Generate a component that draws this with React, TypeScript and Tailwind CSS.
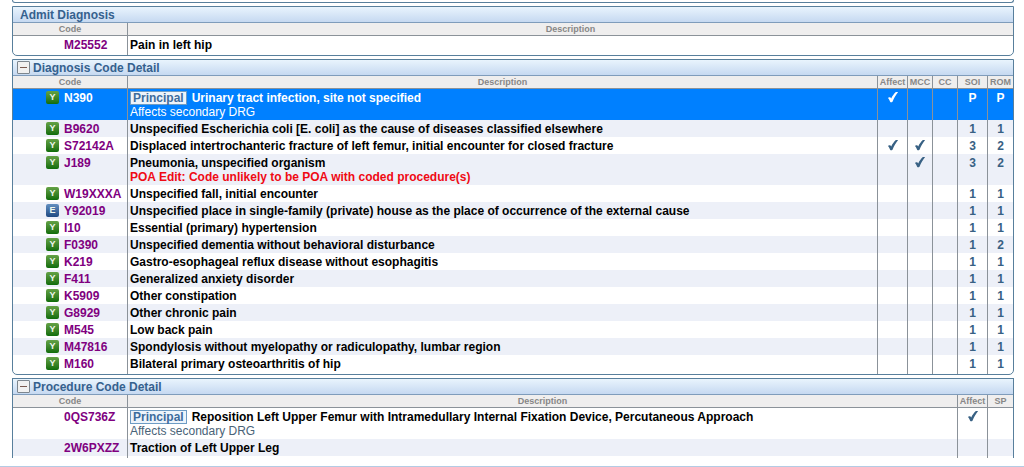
import React, { useState } from "react";
import clsx from "clsx";

interface CodeRow {
  code: string;
  description: string;
  poa?: "Y" | "E";
  principal?: boolean;
  note?: string;
  edit?: string;
  selected?: boolean;
  values?: string[];
}

interface Column {
  label: string;
  width: string;
}

const CHECK = "check";

const diagnosisColumns: Column[] = [
  { label: "Affect", width: "w-[30px]" },
  { label: "MCC", width: "w-[25px]" },
  { label: "CC", width: "w-[25px]" },
  { label: "SOI", width: "w-[30px]" },
  { label: "ROM", width: "w-[26px]" },
];

const procedureColumns: Column[] = [
  { label: "Affect", width: "w-[30px]" },
  { label: "SP", width: "w-[26px]" },
];

const admitRows: CodeRow[] = [
  { code: "M25552", description: "Pain in left hip" },
];

const diagnosisRows: CodeRow[] = [
  {
    code: "N390",
    description: "Urinary tract infection, site not specified",
    poa: "Y",
    principal: true,
    note: "Affects secondary DRG",
    selected: true,
    values: [CHECK, "", "", "P", "P"],
  },
  {
    code: "B9620",
    description:
      "Unspecified Escherichia coli [E. coli] as the cause of diseases classified elsewhere",
    poa: "Y",
    values: ["", "", "", "1", "1"],
  },
  {
    code: "S72142A",
    description:
      "Displaced intertrochanteric fracture of left femur, initial encounter for closed fracture",
    poa: "Y",
    values: [CHECK, CHECK, "", "3", "2"],
  },
  {
    code: "J189",
    description: "Pneumonia, unspecified organism",
    poa: "Y",
    edit: "POA Edit: Code unlikely to be POA with coded procedure(s)",
    values: ["", CHECK, "", "3", "2"],
  },
  {
    code: "W19XXXA",
    description: "Unspecified fall, initial encounter",
    poa: "Y",
    values: ["", "", "", "1", "1"],
  },
  {
    code: "Y92019",
    description:
      "Unspecified place in single-family (private) house as the place of occurrence of the external cause",
    poa: "E",
    values: ["", "", "", "1", "1"],
  },
  {
    code: "I10",
    description: "Essential (primary) hypertension",
    poa: "Y",
    values: ["", "", "", "1", "1"],
  },
  {
    code: "F0390",
    description: "Unspecified dementia without behavioral disturbance",
    poa: "Y",
    values: ["", "", "", "1", "2"],
  },
  {
    code: "K219",
    description: "Gastro-esophageal reflux disease without esophagitis",
    poa: "Y",
    values: ["", "", "", "1", "1"],
  },
  {
    code: "F411",
    description: "Generalized anxiety disorder",
    poa: "Y",
    values: ["", "", "", "1", "1"],
  },
  {
    code: "K5909",
    description: "Other constipation",
    poa: "Y",
    values: ["", "", "", "1", "1"],
  },
  {
    code: "G8929",
    description: "Other chronic pain",
    poa: "Y",
    values: ["", "", "", "1", "1"],
  },
  {
    code: "M545",
    description: "Low back pain",
    poa: "Y",
    values: ["", "", "", "1", "1"],
  },
  {
    code: "M47816",
    description: "Spondylosis without myelopathy or radiculopathy, lumbar region",
    poa: "Y",
    values: ["", "", "", "1", "1"],
  },
  {
    code: "M160",
    description: "Bilateral primary osteoarthritis of hip",
    poa: "Y",
    values: ["", "", "", "1", "1"],
  },
];

const procedureRows: CodeRow[] = [
  {
    code: "0QS736Z",
    description:
      "Reposition Left Upper Femur with Intramedullary Internal Fixation Device, Percutaneous Approach",
    principal: true,
    note: "Affects secondary DRG",
    values: [CHECK, ""],
  },
  {
    code: "2W6PXZZ",
    description: "Traction of Left Upper Leg",
    values: ["", ""],
  },
];

const CheckMark: React.FC = () => (
  <svg
    viewBox="0 0 12 12"
    className="w-3 h-3 mx-auto"
    fill="currentColor"
    role="img"
    aria-label="Yes"
  >
    <path d="M0.9 6.9 C1.6 6.1 2.8 5.9 3.5 6.5 C3.8 6.8 4 7.2 4.2 7.6 C5.4 5 7 2.7 8.9 1.1 L11.1 1.1 C8.9 3.8 7 7.2 5.5 10.7 C4.8 11.4 3.5 11.4 3.1 10.7 C2.6 9.4 2 7.9 0.9 6.9 Z" />
  </svg>
);

const PoaBadge: React.FC<{ value?: "Y" | "E" }> = ({ value }) => (
  <span
    className={clsx(
      "w-[13px] h-[13px] shrink-0 rounded-[2px] text-[9px] leading-[13px] text-center text-[#f0f7ee]",
      value === "Y" && "bg-linear-to-b from-[#64a246] to-[#0c6d09]",
      value === "E" && "bg-linear-to-b from-[#638fc0] to-[#1f4a82]"
    )}
  >
    {value}
  </span>
);

const Row: React.FC<{ row: CodeRow }> = ({ row }) => (
  <tr
    className={clsx(
      "align-top",
      row.selected
        ? "bg-[#0080ff] text-white"
        : "even:bg-[#edf0f8] text-black"
    )}
  >
    <td className="pt-[2px] pb-px pl-[33px]">
      <div
        className={clsx(
          "flex gap-[5px] font-bold",
          !row.selected && "text-[#800080]"
        )}
      >
        <PoaBadge value={row.poa} />
        {row.code}
      </div>
    </td>
    <td className="pt-[2px] pb-px pl-[2px] border-l border-[#8b9299]">
      <div className="flex gap-[5px] font-bold">
        {row.principal && (
          <span className="h-[14px] px-[2px] border border-[#6d9cc4] bg-[#edf4fb] text-[#3d6c9c] leading-[12px]">
            Principal
          </span>
        )}
        {row.description}
      </div>
      {row.note && (
        <div className={clsx(!row.selected && "text-[#496378]")}>
          {row.note}
        </div>
      )}
      {row.edit && <div className="font-bold text-[#f00a14]">{row.edit}</div>}
    </td>
    {row.values?.map((value, i) => (
      <td
        key={i}
        className={clsx(
          "pt-[2px] pb-px px-0 border-l border-[#8b9299] text-center font-bold",
          !row.selected && "text-[#386184]"
        )}
      >
        {value === CHECK ? <CheckMark /> : value}
      </td>
    ))}
  </tr>
);

const CodePanel: React.FC<{
  title: string;
  rows: CodeRow[];
  columns?: Column[];
  collapsible?: boolean;
  open?: boolean;
}> = ({ title, rows, columns = [], collapsible, open }) => {
  const [expanded, setExpanded] = useState(true);

  return (
    <section
      className={clsx(
        "border border-[#587f9c] overflow-hidden",
        open ? "border-b-0" : "rounded-b-[5px]"
      )}
    >
      <div
        className={clsx(
          "flex items-center gap-[3px] h-4 border-b border-[#7f9cbb] bg-linear-to-b from-[#e9f4fd] to-[#c6d9f1]",
          collapsible ? "pl-1" : "pl-[7px]"
        )}
      >
        {collapsible && (
          <button
            type="button"
            aria-label={expanded ? `Collapse ${title}` : `Expand ${title}`}
            onClick={() => setExpanded(!expanded)}
            className="flex items-center justify-center w-[13px] h-[13px] border border-[#7d868e] rounded-[1px] bg-[#f0f0f0]"
          >
            <svg viewBox="0 0 9 9" className="w-[9px] h-[9px]">
              <path
                d={expanded ? "M1 4.5 H8" : "M1 4.5 H8 M4.5 1 V8"}
                stroke="#7a5a50"
                strokeWidth="1"
              />
            </svg>
          </button>
        )}
        <h2 className="font-bold text-[#35618e]">{title}</h2>
      </div>
      {expanded && (
        <table className="w-full table-fixed border-separate border-spacing-0">
          <thead className="bg-[#efeeee] text-[9px] leading-[12px] text-[#878787]">
            <tr>
              <th className="w-[114px] p-0 border-b border-[#8b9299]">Code</th>
              <th className="p-0 border-b border-l border-[#8b9299]">
                Description
              </th>
              {columns.map((column) => (
                <th
                  key={column.label}
                  className={clsx(
                    "p-0 border-b border-l border-[#8b9299]",
                    column.width
                  )}
                >
                  {column.label}
                </th>
              ))}
            </tr>
          </thead>
          <tbody>
            {rows.map((row) => (
              <Row key={row.code} row={row} />
            ))}
          </tbody>
          {/* keeps the column lines running to the panel edge */}
          <tfoot aria-hidden="true">
            <tr>
              <td className="h-[2px] p-0" />
              <td className="h-[2px] p-0 border-l border-[#8b9299]" />
              {columns.map((column) => (
                <td
                  key={column.label}
                  className="h-[2px] p-0 border-l border-[#8b9299]"
                />
              ))}
            </tr>
          </tfoot>
        </table>
      )}
    </section>
  );
};

const App: React.FC = () => (
  <main className="bg-white font-['Liberation_Sans',Arial,sans-serif] text-[12px] leading-[14px]">
    <div className="flex flex-col gap-[3px] ml-3 mr-[10px]">
      <div className="h-[3px] border border-t-0 border-[#587f9c] rounded-b-[5px]" />
      <CodePanel title="Admit Diagnosis" rows={admitRows} />
      <CodePanel
        title="Diagnosis Code Detail"
        rows={diagnosisRows}
        columns={diagnosisColumns}
        collapsible
      />
      <CodePanel
        title="Procedure Code Detail"
        rows={procedureRows}
        columns={procedureColumns}
        collapsible
        open
      />
    </div>
    <div className="mt-2 border-t border-[#b4cbe4]" />
  </main>
);

export default App;
